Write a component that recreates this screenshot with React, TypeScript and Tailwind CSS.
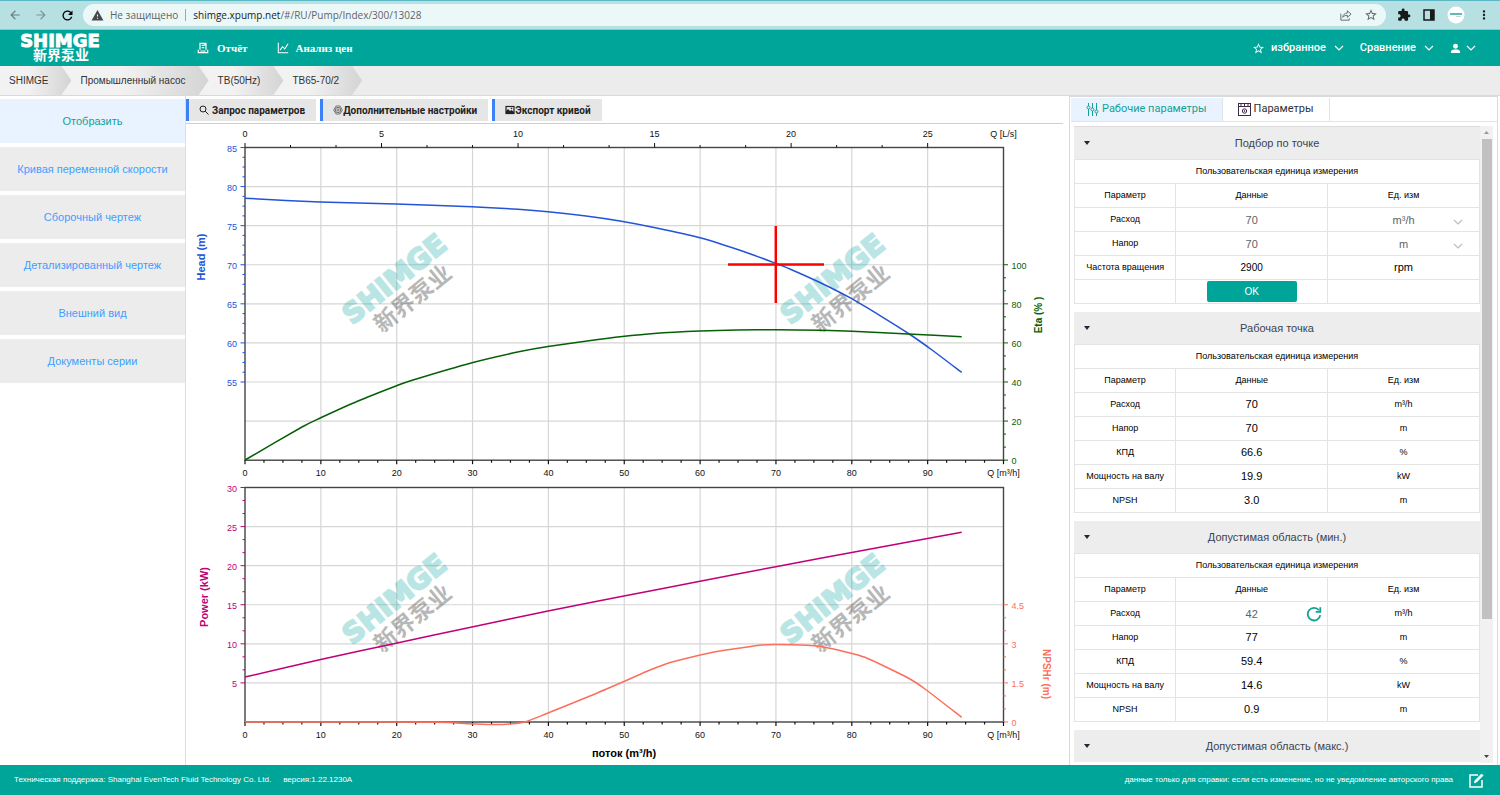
import { useState, type ReactNode } from "react";
import {
  MdArrowBack,
  MdArrowForward,
  MdExtension,
  MdMoreVert,
  MdRefresh,
  MdStarBorder,
  MdWarning,
} from "react-icons/md";

const SIDE_ITEMS = [
  "Отобразить",
  "Кривая переменной скорости",
  "Сборочный чертеж",
  "Детализированный чертеж",
  "Внешний вид",
  "Документы серии",
];

const CRUMBS = [
  { label: "SHIMGE", cls: "z-40 pl-[9px] pr-[23px]" },
  { label: "Промышленный насос", cls: "z-30 -ml-[10px] pl-[19px] pr-[23px]" },
  { label: "TB(50Hz)", cls: "z-20 -ml-[10px] pl-[19px] pr-[23px]" },
  { label: "TB65-70/2", cls: "z-10 -ml-[10px] pl-[19px] pr-[23px]" },
];

function Chevron({ className }: { className: string }) {
  return (
    <svg viewBox="0 0 10 6" className={className} fill="none" stroke="currentColor" strokeWidth="1.2" aria-hidden="true">
      <path d="M1 1l4 4 4-4" />
    </svg>
  );
}

function BrowserBar() {
  return (
    <div className="flex h-[30px] shrink-0 items-center border-t border-b border-t-[#5cb8c4] border-b-[#8fc9cc] bg-[#b7e0e3] text-[#5f6368]">
      <div className="flex items-center gap-3 pr-2 pl-2">
        <button aria-label="Назад"><MdArrowBack className="size-[14px] text-[#6b7f82]" /></button>
        <button aria-label="Вперёд"><MdArrowForward className="size-[14px] text-[#7f9396]" /></button>
        <button aria-label="Обновить"><MdRefresh className="size-[15px] stroke-black text-black" /></button>
      </div>
      <div className="flex h-[22px] flex-1 items-center rounded-full bg-[#ecf8f8] pl-2 pr-2 font-['Open_Sans',sans-serif] text-[10px]">
        <MdWarning className="size-[13px] text-[#45494c]" />
        <span className="pl-[6px]">Не защищено</span>
        <span className="mx-[7px] h-3 w-px bg-[#9aa9ab]" />
        <span className="flex-1">
          <span className="text-[#202124]">shimge.xpump.net</span>/#/RU/Pump/Index/300/13028
        </span>
        <button aria-label="Поделиться" className="mr-3">
          <svg viewBox="0 0 14 14" className="size-[13px]" fill="none" stroke="currentColor" aria-hidden="true">
            <path d="M2 5v7h9v-2M4 9c.4-3 2.200-4.500 5-4.700V2l4 3.500L9 9V6.800C7 6.800 5.300 7.400 4 9z" />
          </svg>
        </button>
        <button aria-label="Добавить в закладки"><MdStarBorder className="size-[14px]" /></button>
      </div>
      <div className="flex items-center gap-3 pl-[11px] pr-[9px] text-[#17191a]">
        <button aria-label="Расширения"><MdExtension className="size-[14px]" /></button>
        <button aria-label="Боковая панель">
          <svg viewBox="0 0 12 12" className="size-3" aria-hidden="true">
            <rect x="1" y="1" width="10" height="10" fill="none" stroke="currentColor" strokeWidth="1.500" />
            <rect x="7" y="1" width="4" height="10" fill="currentColor" />
          </svg>
        </button>
        <button aria-label="Профиль">
          <svg viewBox="0 0 18 18" className="size-[18px]" aria-hidden="true">
            <circle cx="9" cy="9" r="8.500" fill="#fff" />
            <path d="M3 8h12" stroke="#3da9a4" strokeWidth="1.600" />
            <path d="M9 10.500h5" stroke="#c2dcdb" />
          </svg>
        </button>
        <button aria-label="Меню"><MdMoreVert className="size-[14px]" /></button>
      </div>
    </div>
  );
}

function AppHeader() {
  return (
    <header className="flex h-9 shrink-0 items-center bg-[#00a59a] text-white">
      <a href="#/" className="flex w-[197px] flex-col pl-[16px]">
        <svg viewBox="0 0 90 36" className="h-9 w-[90px]" fill="#fff" role="img" aria-label="SHIMGE 新界泵业">
          <text x="44" y="17" textAnchor="middle" fontFamily="DejaVu Sans" fontWeight="700" fontSize="18" stroke="#fff">SHIMGE</text>
          <text x="45" y="30" textAnchor="middle" fontFamily="Noto Sans CJK SC" fontWeight="700" fontSize="14">新界泵业</text>
        </svg>
      </a>
      <nav className="flex items-center gap-[30px] font-['Liberation_Serif',serif] text-[11px] font-bold">
        <a href="#/report" className="flex items-center gap-2">
          <svg viewBox="0 0 14 14" className="size-3" fill="none" stroke="currentColor" strokeWidth="1.400" aria-hidden="true">
            <path d="M3.500 9V1.500h7V9M5.500 4h3M5.500 6.500h3M9 1.500v2h1.500" />
            <path d="M1.500 9v3.500h11V9M1 12.500h12M4 10.500h6" />
          </svg>
          Отчёт
        </a>
        <a href="#/prices" className="flex items-center gap-[6px]">
          <svg viewBox="0 0 14 14" className="size-3" fill="none" stroke="currentColor" strokeWidth="1.200" aria-hidden="true">
            <path d="M1.500 1v11.500H13M3.500 9.500l3-4 2.500 2.500 4-6" />
          </svg>
          Анализ цен
        </a>
      </nav>
      <div className="ml-auto flex items-center pr-6 font-[Roboto,sans-serif] text-[11px] font-medium">
        <MdStarBorder className="size-[13px]" />
        <button className="ml-[6px] flex items-center gap-2">избранное <Chevron className="h-[6px] w-[10px]" /></button>
        <button className="ml-4 flex items-center gap-2">Сравнение <Chevron className="h-[6px] w-[10px]" /></button>
        <button aria-label="Пользователь" className="ml-4 flex items-center gap-[5px]">
          <svg viewBox="0 0 12 12" className="size-[11px]" fill="currentColor" aria-hidden="true">
            <circle cx="6" cy="3.500" r="2.700" />
            <path d="M1 11V9.500C1 7.500 3 7 6 7s5 .5 5 2.500V11z" />
          </svg>
          <Chevron className="h-[6px] w-[10px]" />
        </button>
      </div>
    </header>
  );
}

function Breadcrumbs() {
  return (
    <nav aria-label="Навигация" className="h-[30px] shrink-0 border-b border-[#d9d9d9] bg-[#ececec]">
      <ol className="flex h-full">
        {CRUMBS.map((c) => (
          <li
            key={c.label}
            className={`flex items-center bg-linear-to-r from-[#f2f2f2] from-40% to-[#d4d4d4] text-[10px] text-[#333] [clip-path:polygon(0_0,calc(100%-10px)_0,100%_50%,calc(100%-10px)_100%,0_100%)] ${c.cls}`}
          >
            <a href="#/">{c.label}</a>
          </li>
        ))}
      </ol>
    </nav>
  );
}

function SideMenu() {
  const [active, setActive] = useState(0);
  return (
    <nav className="flex w-[186px] shrink-0 flex-col gap-1 border-r border-[#dedede] pt-[3px]">
      {SIDE_ITEMS.map((label, i) => (
        <button
          key={label}
          onClick={() => setActive(i)}
          className={`h-11 text-[11px] ${i === active ? "bg-[#e9f3ff] text-[#13a195]" : "bg-[#ececec] text-[#409eff]"}`}
        >
          {label}
        </button>
      ))}
    </nav>
  );
}

function ToolButton({ icon, gap, children }: { icon: ReactNode; gap: string; children: ReactNode }) {
  return (
    <button className={`flex h-[22px] items-center border-l-[3px] border-[#3b82f6] bg-[#e6e6e6] pr-[11px] pl-[10px] text-[10px] font-bold text-[#222] ${gap}`}>
      {icon}
      {children}
    </button>
  );
}

function Toolbar() {
  return (
    <div className="mr-[6px] flex h-[27px] shrink-0 gap-1 border-b border-[#cfcfcf] pt-[2px] font-[Roboto,sans-serif]">
      <ToolButton
        gap="gap-[3px]"
        icon={
          <svg viewBox="0 0 10 10" className="size-[10px]" fill="none" stroke="currentColor" aria-hidden="true">
            <circle cx="4" cy="4" r="3" />
            <path d="M6.200 6.200L9.500 9.500" />
          </svg>
        }
      >
        Запрос параметров
      </ToolButton>
      <ToolButton
        gap="gap-0"
        icon={
          <svg viewBox="0 0 10 10" className="size-[10px]" fill="none" stroke="#555" strokeWidth="0.800" aria-hidden="true">
            <path d="M3 1h4l2.300 4L7 9H3L.7 5z" />
            <circle cx="5" cy="5" r="2.700" />
            <circle cx="5" cy="5" r="1.100" />
          </svg>
        }
      >
        Дополнительные настройки
      </ToolButton>
      <ToolButton
        gap="gap-0"
        icon={
          <svg viewBox="0 0 10 10" className="size-[10px]" aria-hidden="true">
            <rect x="1" y="1.500" width="8" height="7" fill="none" stroke="currentColor" strokeWidth="1.200" />
            <path d="M1 8V6l2-2 2 2 1.500-1L9 7v1z" fill="currentColor" />
            <circle cx="6.500" cy="3.500" r=".8" fill="currentColor" />
          </svg>
        }
      >
        Экспорт кривой
      </ToolButton>
    </div>
  );
}

/* Chart geometry */
const X0 = 245;
const X1 = 1003.5;
const DX = 75.85;
const DY = 39.08;
const TOP_A = 147.5;
const BOT_A = 460.2;
const TOP_B = 487.5;
const BOT_B = 722;

const BLUE = "#2353d8";
const GREEN = "#065f06";
const MAGENTA = "#c00078";
const CORAL = "#fb6f5c";

type Pt = [number, number];

const HEAD: Pt[] = [[245, 198.300], [320, 202], [396, 204], [472, 206.800], [518, 209.300], [548, 211.700], [586, 216], [620, 221], [654, 227.500], [700, 237.800], [745, 252], [775.800, 263.400], [791, 269.500], [822, 283.500], [851.700, 298.700], [880, 315.600], [910, 334.500], [932, 350], [961.700, 372.400]];
const ETA: Pt[] = [[245, 460], [302, 427], [320.700, 417.800], [358, 401], [396, 386], [413, 380], [472, 362.700], [520, 351.500], [548, 346.400], [598, 339.500], [620, 336.800], [654, 333.500], [700, 331], [737, 329.900], [776, 329.700], [820, 330.300], [852, 331.200], [913, 334.200], [961.700, 336.700]];
const POWER: Pt[] = [[245, 677], [320.700, 659.500], [396, 643.200], [472, 627], [548, 611], [620, 596.800], [700, 581.300], [775.800, 566.700], [851.700, 552.500], [961.700, 532.300]];
const NPSH: Pt[] = [[245, 722], [330, 722], [437, 722.200], [467, 723.800], [493, 724.600], [510, 724], [525, 722], [548, 713], [590, 696], [625, 681], [650, 670], [672, 662], [692, 657], [717, 651.500], [740, 648], [762, 645], [776, 644.500], [807, 645.200], [822, 646.700], [837, 649.700], [852, 653.500], [865, 657.300], [887, 667.500], [910, 679], [925, 689], [961.700, 717.300]];

function smooth(p: Pt[]) {
  let d = `M${p[0][0]} ${p[0][1]}`;
  for (let i = 0; i < p.length - 1; i++) {
    const a = p[Math.max(i - 1, 0)];
    const b = p[i];
    const c = p[i + 1];
    const e = p[Math.min(i + 2, p.length - 1)];
    d += `C${b[0] + (c[0] - a[0]) / 8} ${b[1] + (c[1] - a[1]) / 8} ${c[0] - (e[0] - b[0]) / 8} ${c[1] - (e[1] - b[1]) / 8} ${c[0]} ${c[1]}`;
  }
  return d;
}

const range = (n: number) => Array.from({ length: n }, (_, i) => i);

function SideAxis({ x, dir, top, labels, sub, color }: { x: number; dir: 1 | -1; top: number; labels: string[]; sub: number; color: string }) {
  const n = (labels.length - 1) * sub + 1;
  return (
    <g stroke={color} fill={color}>
      {range(n).map((i) => {
        const y = top + (i * DY) / sub;
        return <path key={i} d={`M${x} ${y}h${dir * (i % sub === 0 ? 4.500 : 2.500)}`} />;
      })}
      {labels.map((t, i) => (
        <text key={t} stroke="none" x={x + dir * 8} y={top + i * DY + 4} textAnchor={dir === 1 ? "start" : "end"}>
          {t}
        </text>
      ))}
    </g>
  );
}

function FlowAxis({ y }: { y: number }) {
  return (
    <g stroke="#111" fill="#111">
      {range(41).map((i) => (
        <path key={i} d={`M${X0 + (i * DX) / 4} ${y}v${i % 4 === 0 ? 4 : 2.500}`} strokeWidth="1.200" />
      ))}
      {range(10).map((i) => (
        <text key={i} stroke="none" x={X0 + i * DX} y={y + 16} textAnchor="middle">{i * 10}</text>
      ))}
      <text stroke="none" x={X1} y={y + 16} textAnchor="middle">Q [m³/h]</text>
    </g>
  );
}

function Grid({ top, bottom, rows }: { top: number; bottom: number; rows: number }) {
  return (
    <>
      <g stroke="#d6d6d6" strokeWidth="1.200">
        {range(9).map((i) => (
          <path key={i} d={`M${X0 + (i + 1) * DX} ${top}V${bottom}`} />
        ))}
        {range(rows - 1).map((i) => (
          <path key={i} d={`M${X0} ${top + (i + 1) * DY}H${X1}`} />
        ))}
      </g>
      <rect x={X0} y={top} width={X1 - X0} height={bottom - top} fill="none" stroke="#444" strokeWidth="1.400" />
    </>
  );
}

function Watermark({ x, y }: { x: number; y: number }) {
  return (
    <g transform={`translate(${x} ${y}) rotate(-39)`} textAnchor="middle" fontWeight="700">
      <text y="7" fontFamily="DejaVu Sans" fontSize="28" fill="#00a5a0" stroke="#00a5a0" strokeWidth="2" opacity="0.270">SHIMGE</text>
      <text x="2" y="32" fontFamily="Noto Sans CJK SC" fontSize="23" fill="#333" opacity="0.350">新界泵业</text>
    </g>
  );
}

function PumpChart() {
  return (
    <svg
      viewBox="186 124 883 641"
      preserveAspectRatio="xMidYMin meet"
      className="block min-h-0 w-full flex-1"
      fontFamily="Liberation Sans"
      fontSize="9"
      role="img"
      aria-label="Характеристики насоса"
    >
      <Grid top={TOP_A} bottom={BOT_A} rows={8} />
      <Grid top={TOP_B} bottom={BOT_B} rows={6} />
      <Watermark x={396} y={281} />
      <Watermark x={834} y={281} />
      <Watermark x={396} y={601} />
      <Watermark x={834} y={601} />

      <g stroke="#111" fill="#111">
        {range(16).map((i) => (
          <path key={i} d={`M${X0 + i * 45.510} ${TOP_A}v${i % 3 === 0 ? -4.500 : -2.500}`} />
        ))}
        {range(6).map((i) => (
          <text key={i} stroke="none" x={X0 + i * 136.530} y="137" textAnchor="middle">{i * 5}</text>
        ))}
        <text stroke="none" x={X1} y="137" textAnchor="middle">Q [L/s]</text>
      </g>

      <SideAxis x={X0} dir={-1} top={TOP_A} labels={["85", "80", "75", "70", "65", "60", "55"]} sub={4} color={BLUE} />
      <SideAxis x={X1} dir={1} top={TOP_A + 3 * DY} labels={["100", "80", "60", "40", "20", "0"]} sub={3} color={GREEN} />
      <SideAxis x={X0} dir={-1} top={TOP_B} labels={["30", "25", "20", "15", "10", "5"]} sub={3} color={MAGENTA} />
      <SideAxis x={X1} dir={1} top={TOP_B + 3 * DY} labels={["4.5", "3", "1.5", "0"]} sub={3} color={CORAL} />
      <FlowAxis y={BOT_A} />
      <FlowAxis y={BOT_B} />

      <g fill="none" strokeWidth="1.500">
        <path d={smooth(HEAD)} stroke={BLUE} />
        <path d={smooth(ETA)} stroke={GREEN} />
        <path d={smooth(POWER)} stroke={MAGENTA} />
        <path d={smooth(NPSH)} stroke={CORAL} />
      </g>
      <path d="M728 264.500h96M775.800 226v77" stroke="#f00" strokeWidth="2.500" />

      <g fontSize="11" fontWeight="700" textAnchor="middle">
        <text transform="translate(205 257) rotate(-90)" fill={BLUE}>Head (m)</text>
        <text transform="translate(1042 315) rotate(-90)" fontSize="10" fill={GREEN}>Eta (% )</text>
        <text transform="translate(208 597) rotate(-90)" fill={MAGENTA}>Power (kW)</text>
        <text transform="translate(1043 674) rotate(90)" fontSize="10" fill={CORAL}>NPSHr (m)</text>
        <text x="624" y="757" fill="#000">поток (m³/h)</text>
      </g>
    </svg>
  );
}

type Row = { name: string; value: ReactNode; unit: ReactNode };

function UnitSelect({ label, options }: { label: string; options: string[] }) {
  return (
    <div className="grid items-center">
      <select
        aria-label={label}
        className="col-start-1 row-start-1 w-full appearance-none bg-transparent text-[11px] leading-4 text-[#606266] [text-align-last:center]"
      >
        {options.map((o) => (
          <option key={o}>{o}</option>
        ))}
      </select>
      <Chevron className="pointer-events-none col-start-1 row-start-1 mt-1 mr-4 h-[6px] w-[10px] justify-self-end text-[#b9bcc4]" />
    </div>
  );
}

function NumberBox({ label, value }: { label: string; value: string }) {
  return (
    <input
      aria-label={label}
      defaultValue={value}
      className="block w-full bg-transparent text-center text-[11px] leading-4 text-[#606266]"
    />
  );
}

const num = (v: string) => <span className="text-[11px]">{v}</span>;

const duty = (v: string[], flow?: ReactNode): Row[] => [
  { name: "Расход", value: flow ?? num(v[0]), unit: "m³/h" },
  { name: "Напор", value: num(v[1]), unit: "m" },
  { name: "КПД", value: num(v[2]), unit: "%" },
  { name: "Мощность на валу", value: num(v[3]), unit: "kW" },
  { name: "NPSH", value: num(v[4]), unit: "m" },
];

function RefreshButton() {
  return (
    <button aria-label="Обновить расход" className="col-start-1 row-start-1 mr-[5px] justify-self-end text-[#13a195]">
      <svg viewBox="0 0 16 16" className="size-4" fill="none" stroke="currentColor" strokeWidth="1.800" aria-hidden="true">
        <path d="M13 4.200A6.300 6.300 0 1 0 14.300 9.200" />
        <path d="M14.300 1.200v4.600H9.700" />
      </svg>
    </button>
  );
}

const SECTIONS: { title: string; rows: Row[]; closed?: boolean }[] = [
  {
    title: "Подбор по точке",
    rows: [
      { name: "Расход", value: <NumberBox label="Расход" value="70" />, unit: <UnitSelect label="Единица расхода" options={["m³/h", "L/s"]} /> },
      { name: "Напор", value: <NumberBox label="Напор" value="70" />, unit: <UnitSelect label="Единица напора" options={["m", "ft"]} /> },
      { name: "Частота вращения", value: <span className="text-[10px]">2900</span>, unit: <span className="text-[11px]">rpm</span> },
      {
        name: "",
        value: <button className="mx-auto block h-[21px] w-[90px] rounded-[2px] bg-[#00a59a] text-[10px] text-white">OK</button>,
        unit: "",
      },
    ],
  },
  { title: "Рабочая точка", rows: duty(["70", "70", "66.6", "19.9", "3.0"]) },
  {
    title: "Допустимая область (мин.)",
    rows: duty(
      ["42", "77", "59.4", "14.6", "0.9"],
      <div className="grid items-center">
        <div className="col-start-1 row-start-1"><NumberBox label="Минимальный расход" value="42" /></div>
        <RefreshButton />
      </div>,
    ),
  },
  { title: "Допустимая область (макс.)", rows: [], closed: true },
];

function Section({ title, rows, first, closed }: { title: string; rows: Row[]; first: boolean; closed?: boolean }) {
  const [open, setOpen] = useState(!closed);
  return (
    <section>
      <button
        aria-expanded={open}
        onClick={() => setOpen(!open)}
        className={`flex w-full items-center bg-[#ededed] pr-4 pl-[10px] text-[11px] text-[#3a4452] ${first ? "h-[33px] border-t border-[#dcdcdc]" : "h-8"}`}
      >
        <svg viewBox="0 0 6 4" className="h-1 w-[6px] text-[#1c2a3a]" fill="currentColor" aria-hidden="true">
          <path d="M0 0h6L3 4z" />
        </svg>
        <span className="flex-1">{title}</span>
      </button>
      {open && (
        <table className="w-full table-fixed border-collapse text-center text-[9px] text-black [&_td]:border [&_td]:border-[#e4e4e4] [&_td]:p-0 [&_th]:border [&_th]:border-[#e4e4e4] [&_th]:p-0 [&_th]:font-normal">
          <colgroup>
            <col className="w-1/4" />
            <col className="w-3/8" />
            <col className="w-3/8" />
          </colgroup>
          <tbody>
            <tr className="h-6">
              <th colSpan={3}>Пользовательская единица измерения</th>
            </tr>
            <tr className="h-6">
              <th>Параметр</th>
              <th>Данные</th>
              <th>Ед. изм</th>
            </tr>
            {rows.map((r) => (
              <tr key={r.name} className="h-6">
                <td>{r.name}</td>
                <td>{r.value}</td>
                <td>{r.unit}</td>
              </tr>
            ))}
          </tbody>
        </table>
      )}
    </section>
  );
}

function ParameterPanel() {
  return (
    <aside className="mr-[2px] flex w-[429px] shrink-0 flex-col border-x border-t border-[#d9d9d9] pl-px">
      <div role="tablist" className="mt-px flex h-6 shrink-0 border-b border-[#dfe3ea] font-[Roboto,sans-serif] text-[11px]">
        <button role="tab" aria-selected="true" className="flex items-center gap-[3px] bg-[#e9f3ff] px-[15px] text-[#13a195]">
          <svg viewBox="0 0 13 13" className="size-[13px]" fill="none" stroke="currentColor" aria-hidden="true">
            <path d="M2.500 0v3M2.500 6v7M6.500 0v5M6.500 8v5M10.500 0v7M10.500 10v3" />
            <circle cx="2.500" cy="4.500" r="1.500" />
            <circle cx="6.500" cy="6.500" r="1.500" />
            <circle cx="10.500" cy="8.500" r="1.500" />
          </svg>
          Рабочие параметры
        </button>
        <button role="tab" aria-selected="false" className="flex items-center gap-[3px] border-x border-[#dfe3ea] px-[15px] text-[#303133]">
          <svg viewBox="0 0 13 13" className="size-[13px]" fill="none" stroke="#3d2a4a" aria-hidden="true">
            <rect x=".5" y=".5" width="12" height="12" />
            <path d="M.5 3.500h12M3 .5v3M6.500 .5v3M10 .5v3" />
            <circle cx="6.500" cy="8" r="2.200" />
            <circle cx="6.500" cy="8" r=".5" />
          </svg>
          Параметры
        </button>
      </div>
      <div className="flex min-h-0 flex-1 pt-1 pr-1 pl-[3px]">
        <div className="flex min-w-0 flex-1 flex-col gap-2 overflow-hidden">
          {SECTIONS.map((s, i) => (
            <Section key={s.title} title={s.title} rows={s.rows} closed={s.closed} first={i === 0} />
          ))}
        </div>
        <div className="mb-[2px] flex w-[13px] flex-col items-center bg-[#f1f1f1]">
          <svg viewBox="0 0 13 13" className="size-[13px] shrink-0" aria-hidden="true"><path d="M4 8h5L6.500 5z" fill="#999" /></svg>
          <div className="w-[10px] flex-[478] bg-[#c1c1c1]" />
          <div className="flex-[130]" />
          <svg viewBox="0 0 13 13" className="size-[13px] shrink-0" aria-hidden="true"><path d="M4 5h5L6.500 8z" fill="#444" /></svg>
        </div>
      </div>
    </aside>
  );
}

function Footer() {
  return (
    <footer className="flex h-[30px] shrink-0 items-center bg-[#00a59a] pr-4 pl-[14px] text-[8px] text-white">
      <span>Техническая поддержка: Shanghai EvenTech Fluid Technology Co. Ltd.</span>
      <span className="ml-3">версия:1.22.1230A</span>
      <span className="ml-auto">данные только для справки: если есть изменение, но не уведомление авторского права</span>
      <button aria-label="Оставить отзыв" className="ml-4">
        <svg viewBox="0 0 15 15" className="size-[15px]" fill="none" stroke="currentColor" strokeWidth="1.500" aria-hidden="true">
          <path d="M9 2H1v12h12V7" />
          <path d="M5.500 9.800l.6-2.300L12.500 1 14 2.500 7.600 9z" fill="currentColor" strokeWidth="0.800" />
        </svg>
      </button>
    </footer>
  );
}

export default function App() {
  return (
    <div className="flex h-screen flex-col overflow-hidden bg-white font-['Liberation_Sans','Noto_Sans_CJK_SC',sans-serif]">
      <BrowserBar />
      <AppHeader />
      <Breadcrumbs />
      <div className="flex min-h-0 flex-1">
        <SideMenu />
        <main className="flex min-w-0 flex-1 flex-col pt-px">
          <Toolbar />
          <PumpChart />
        </main>
        <ParameterPanel />
      </div>
      <Footer />
    </div>
  );
}
